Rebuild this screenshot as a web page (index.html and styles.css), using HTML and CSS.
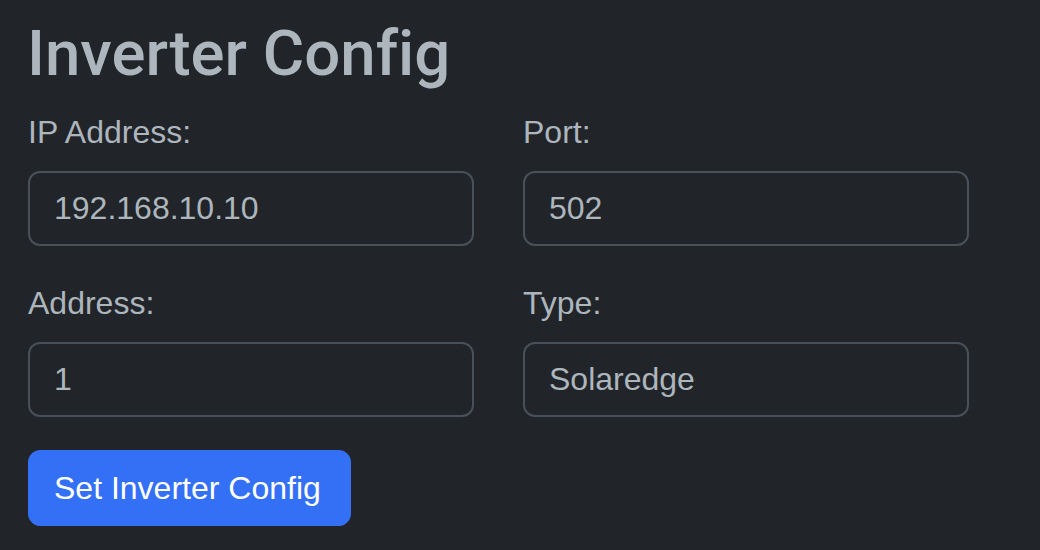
FILE: index.html
```html
<!DOCTYPE html>
<html lang="en">
<head>
<meta charset="utf-8">
<title>Inverter Config</title>
<link rel="stylesheet" href="styles.css">
</head>
<body>
<main class="page">
  <h2 class="title">Inverter Config</h2>
  <form class="config-form">
    <div class="grid">
      <div class="field">
        <label class="form-label" for="ip">IP Address:</label>
        <input class="form-control" id="ip" type="text" value="192.168.10.10">
      </div>
      <div class="field">
        <label class="form-label" for="port">Port:</label>
        <input class="form-control" id="port" type="text" value="502">
      </div>
      <div class="field">
        <label class="form-label" for="addr">Address:</label>
        <input class="form-control" id="addr" type="text" value="1">
      </div>
      <div class="field">
        <label class="form-label" for="type">Type:</label>
        <input class="form-control" id="type" type="text" value="Solaredge">
      </div>
    </div>
    <button class="btn-primary" type="button">Set Inverter Config</button>
  </form>
</main>
</body>
</html>
```

FILE: styles.css
```css
* { box-sizing: border-box; }

html, body {
  margin: 0;
  padding: 0;
  background: #212529;
}

body {
  font-family: "Liberation Sans", Arial, sans-serif;
  color: #adb5bd;
  width: 1040px;
  height: 550px;
  overflow: hidden;
}

.page {
  padding: 15px 0 0 28px;
}

.title {
  margin: 0 0 16px -1px;
  font-family: Roboto, "Liberation Sans", Arial, sans-serif;
  font-size: 63.5px;
  font-weight: 500;
  line-height: 77px;
  font-variant-ligatures: none;
  color: #adb5bd;
}

.config-form {
  display: flex;
  flex-direction: column;
  align-items: flex-start;
}

.grid {
  display: grid;
  grid-template-columns: 446px 446px;
  column-gap: 49px;
  row-gap: 33px;
  margin-bottom: 33px;
}

.field {
  display: flex;
  flex-direction: column;
}

.form-label {
  font-size: 32px;
  line-height: 48px;
  margin-bottom: 15px;
  color: #adb5bd;
}

.form-control {
  width: 100%;
  height: 75px;
  padding: 12px 24px;
  font-family: "Liberation Sans", Arial, sans-serif;
  font-size: 32px;
  line-height: 48px;
  color: #adb5bd;
  background: #212529;
  border: 2px solid #495057;
  border-radius: 12px;
  outline: none;
}

.btn-primary {
  height: 76px;
  padding: 12px 29px 12px 25px;
  font-family: "Liberation Sans", Arial, sans-serif;
  font-size: 32px;
  line-height: 48px;
  color: #ffffff;
  background: #3370f5;
  border: 1px solid #3370f5;
  border-radius: 12px;
}
```
